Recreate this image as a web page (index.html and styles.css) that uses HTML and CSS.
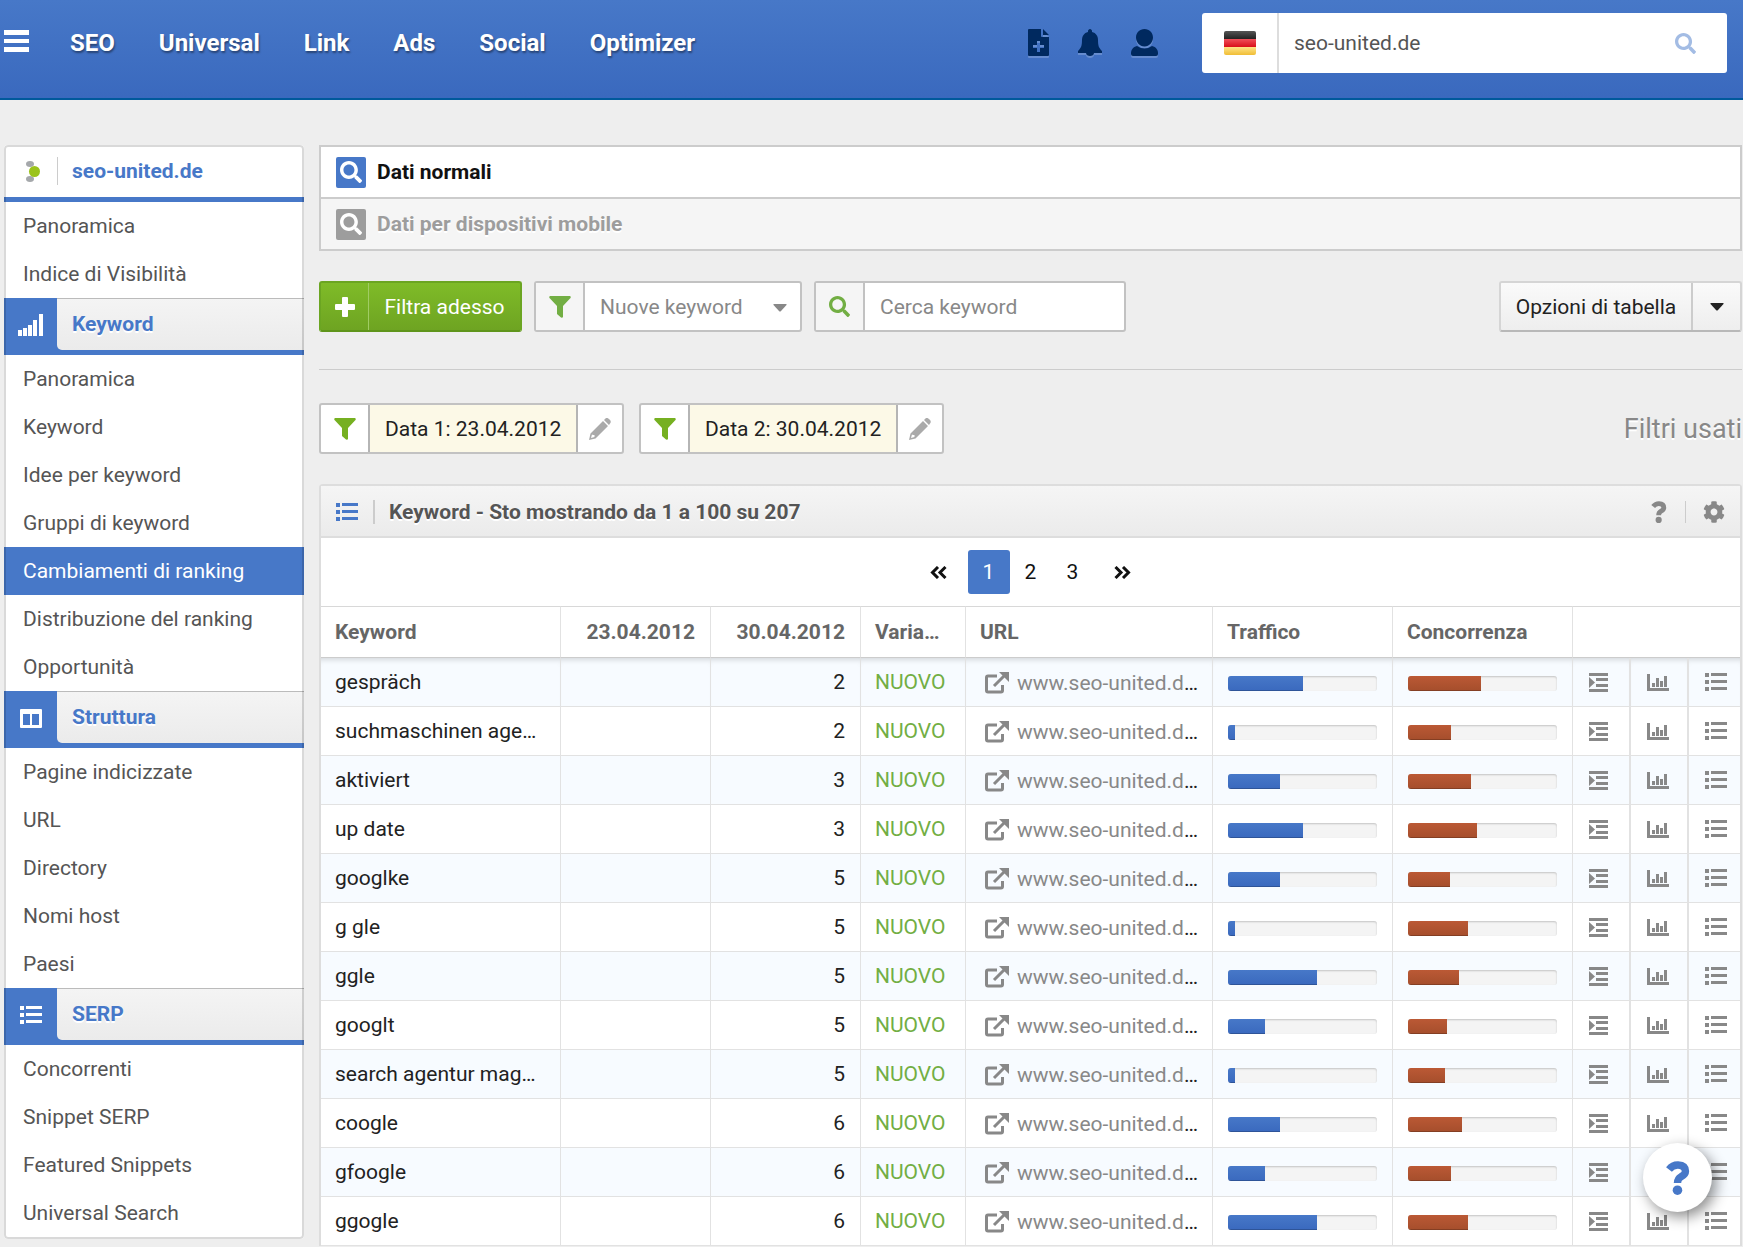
FILE: index.html
```html
<!DOCTYPE html>
<html lang="it">
<head>
  <meta charset="UTF-8">
  <meta name="viewport" content="width=device-width, initial-scale=1.0">
  <title>Cambiamenti di ranking - seo-united.de</title>
  <link rel="stylesheet" href="styles.css">
</head>
<body>
  <!-- Icon sprite -->
  <svg class="sprite" aria-hidden="true">
    <symbol id="i-search" viewBox="0 0 512 512"><path d="M505 442.7L405.3 343c-4.500-4.500-10.600-7-17-7H372c27.600-35.300 44-79.700 44-128C416 93.100 322.900 0 208 0S0 93.100 0 208s93.100 208 208 208c48.300 0 92.700-16.400 128-44v16.300c0 6.400 2.500 12.500 7 17l99.700 99.700c9.400 9.400 24.600 9.400 33.900 0l28.300-28.300c9.400-9.400 9.400-24.600.1-34zM208 336c-70.700 0-128-57.200-128-128 0-70.700 57.200-128 128-128 70.700 0 128 57.200 128 128 0 70.700-57.200 128-128 128z"/></symbol>
    <symbol id="i-cog" viewBox="0 0 512 512"><path d="M487.4 315.7l-42.6-24.6c4.3-23.2 4.3-47 0-70.2l42.6-24.6c4.9-2.8 7.1-8.6 5.5-14-11.1-35.6-30-67.8-54.7-94.6-3.8-4.1-10-5.1-14.8-2.3L380.8 110c-17.9-15.4-38.5-27.3-60.8-35.1V25.8c0-5.6-3.9-10.5-9.4-11.7-36.7-8.2-74.3-7.8-109.2 0-5.5 1.200-9.400 6.100-9.400 11.700V75c-22.200 7.900-42.800 19.800-60.800 35.100L88.700 85.500c-4.900-2.800-11-1.900-14.800 2.300-24.700 26.700-43.600 58.900-54.700 94.600-1.700 5.400.6 11.200 5.500 14L67.300 221c-4.300 23.200-4.300 47 0 70.200l-42.600 24.600c-4.900 2.800-7.100 8.600-5.500 14 11.100 35.600 30 67.800 54.700 94.600 3.800 4.100 10 5.100 14.800 2.300l42.600-24.600c17.900 15.400 38.500 27.300 60.800 35.100v49.200c0 5.600 3.900 10.500 9.400 11.700 36.700 8.200 74.300 7.800 109.200 0 5.500-1.200 9.400-6.100 9.400-11.700v-49.200c22.200-7.900 42.800-19.800 60.800-35.100l42.600 24.600c4.900 2.800 11 1.900 14.800-2.300 24.700-26.700 43.600-58.900 54.700-94.600 1.500-5.500-.7-11.300-5.600-14.100zM256 336c-44.100 0-80-35.900-80-80s35.900-80 80-80 80 35.900 80 80-35.900 80-80 80z"/></symbol>
    <symbol id="i-menu" viewBox="0 0 25 22"><path d="M0 0h25v5H0zM0 9h25v4H0zM0 17h25v5H0z"/></symbol>
    <symbol id="i-file" viewBox="0 0 21 27"><path fill-rule="evenodd" d="M1 0h12v7q0 1 1 1h7v18q0 1-1 1H1q-1 0-1-1V1q0-1 1-1zM9 12v4H5v3h4v4h3v-4h4v-3h-4v-4zM15 0l6 6h-6z"/></symbol>
    <symbol id="i-bell" viewBox="0 0 24 27"><path d="M12 0c1 0 2 1 2 2v1c4 1 6 4 6 8 0 6 1 8 4 11v2H0v-2c3-3 4-5 4-11 0-4 2-7 6-8V2c0-1 1-2 2-2zM8 24h8c0 2-2 3-4 3s-4-1-4-3z"/></symbol>
    <symbol id="i-user" viewBox="0 0 27 27"><path d="M13.500 0c5 0 8.500 4 8.500 8.500s-3.500 9-8.500 9S5 13 5 8.500 8.500 0 13.500 0zM6 17q7.500 5 15 0c4 1 6 4 6 7v1q0 2-2 2H2q-2 0-2-2v-1c0-3 2-6 6-7z"/></symbol>
    <symbol id="i-list" viewBox="0 0 22 18"><path d="M0 0h4v4H0zM6 0h16v3H6zM0 7h4v4H0zM6 7h16v3H6zM0 14h4v4H0zM6 14h16v3H6z"/></symbol>
    <symbol id="i-signal" viewBox="0 0 25 22"><path d="M0 16h4v6H0zM5 14h4v8H5zM10 11h4v11h-4zM15 6h4v16h-4zM21 0h4v22h-4z"/></symbol>
    <symbol id="i-columns" viewBox="0 0 22 19"><path fill-rule="evenodd" d="M1 0h20q1 0 1 1v17q0 1-1 1H1q-1 0-1-1V1q0-1 1-1zM3 5v11h7V5zM12 5v11h7V5z"/></symbol>
    <symbol id="i-filter" viewBox="0 0 22 22"><path d="M1 0h20q1.500 1 0 2.500L14 10v11q-.5 1-2 .5L8 18v-8L1 2.500Q-.5 1 1 0z"/></symbol>
    <symbol id="i-pencil" viewBox="0 0 22 22"><path d="M16 1l1-1q1.500-.5 3 1l1 1q1.500 1.500 0 3.500L20 7l-5-5zM14 3l5 5L6.500 20.500 0 22l1.500-6.500zM3 16.500L2 20l3.500-1v-2H4z" fill-rule="evenodd"/></symbol>
    <symbol id="i-plus" viewBox="0 0 20 20"><path d="M7 1q0-1 1-1h4q1 0 1 1v6h6q1 0 1 1v4q0 1-1 1h-6v6q0 1-1 1H8q-1 0-1-1v-6H1q-1 0-1-1V8q0-1 1-1h6z"/></symbol>
    <symbol id="i-caret" viewBox="0 0 14 8"><path d="M1 0h12q1 0 .5 1L8 7q-1 1-2 0L.5 1Q0 0 1 0z"/></symbol>
    <symbol id="i-help" viewBox="0 0 22 32"><path d="M2.500 8Q6 3.600 11 3.700q7 .3 7 6 0 3-4 5-3.500 2-3.500 6" fill="none" stroke="currentColor" stroke-width="7"/><circle cx="10.500" cy="27.500" r="4.500"/></symbol>
    <symbol id="i-external" viewBox="0 0 24 22"><path d="M12 4H3q-1.500 0-1.500 1.500v13Q1.500 20 3 20h13q1.500 0 1.500-1.500V13M9 14L20 3" fill="none" stroke="currentColor" stroke-width="3"/><path d="M14 0h10v10l-3-3-4-4z"/></symbol>
    <symbol id="i-indent" viewBox="0 0 19 19"><path d="M0 0h19v3H0zM7 5h12v3H7zM7 11h12v3H7zM0 16h19v3H0zM0 4l6 5.500L0 15z"/></symbol>
    <symbol id="i-chart" viewBox="0 0 22 17"><path d="M0 0h3v14h19v3H0zM5 9h3v4H5zM9 4h3v9H9zM13 7h3v6h-3zM17 2h3v11h-3z"/></symbol>
    <symbol id="i-prev" viewBox="0 0 17 13"><path d="M8 1L2.500 6.500 8 12M15.500 1L10 6.500l5.500 5.500" fill="none" stroke="currentColor" stroke-width="3"/></symbol>
    <symbol id="i-next" viewBox="0 0 17 13"><path d="M1.500 1L7 6.500 1.500 12M9 1l5.500 5.500L9 12" fill="none" stroke="currentColor" stroke-width="3"/></symbol>
  </svg>

  <header class="topbar">
    <button class="menu-btn" type="button" aria-label="Menu"><svg width="25" height="22"><use href="#i-menu"/></svg></button>
    <nav class="topnav">
      <a href="#">SEO</a>
      <a href="#">Universal</a>
      <a href="#">Link</a>
      <a href="#">Ads</a>
      <a href="#">Social</a>
      <a href="#">Optimizer</a>
    </nav>
    <div class="topicons">
      <button type="button" aria-label="Nuovo report"><svg width="21" height="27"><use href="#i-file"/></svg></button>
      <button type="button" aria-label="Notifiche"><svg width="24" height="27"><use href="#i-bell"/></svg></button>
      <button type="button" aria-label="Account"><svg width="27" height="27"><use href="#i-user"/></svg></button>
    </div>
    <form class="domain-search">
      <button class="flag-btn" type="button" aria-label="Germania">
        <svg width="32" height="24" viewBox="0 0 32 24">
          <defs>
            <linearGradient id="fk" x2="0" y2="1"><stop offset="0" stop-color="#555"/><stop offset="1" stop-color="#222"/></linearGradient>
            <linearGradient id="fr" x2="0" y2="1"><stop offset="0" stop-color="#f0505a"/><stop offset="1" stop-color="#d90f1a"/></linearGradient>
            <linearGradient id="fg" x2="0" y2="1"><stop offset="0" stop-color="#ffe488"/><stop offset="1" stop-color="#f0bd35"/></linearGradient>
          </defs>
          <path d="M0 8V2q0-2 2-2h28q2 0 2 2v6z" fill="url(#fk)"/>
          <path d="M0 8h32v8H0z" fill="url(#fr)"/>
          <path d="M0 16h32v6q0 2-2 2H2q-2 0-2-2z" fill="url(#fg)"/>
        </svg>
      </button>
      <input type="text" value="seo-united.de" aria-label="Dominio">
      <button class="go-btn" type="submit" aria-label="Cerca"><svg width="21" height="21"><use href="#i-search"/></svg></button>
    </form>
  </header>

  <div class="page">
    <aside class="sidebar">
      <a class="side-domain" href="#">
        <span class="side-favicon">
          <svg width="14" height="21" viewBox="0 0 14 21"><ellipse cx="4" cy="3" rx="4" ry="3" fill="#a5a8ab"/><ellipse cx="4" cy="18" rx="4" ry="3" fill="#a5a8ab"/><circle cx="8.500" cy="10.500" r="5.500" fill="#9bc31c"/></svg>
        </span>
        <span>seo-united.de</span>
      </a>
      <a class="side-link" href="#">Panoramica</a>
      <a class="side-link" href="#">Indice di Visibilità</a>
      <a class="side-section" href="#"><span class="side-icon"><svg width="25" height="22"><use href="#i-signal"/></svg></span><span class="side-label">Keyword</span></a>
      <a class="side-link" href="#">Panoramica</a>
      <a class="side-link" href="#">Keyword</a>
      <a class="side-link" href="#">Idee per keyword</a>
      <a class="side-link" href="#">Gruppi di keyword</a>
      <a class="side-link active" href="#">Cambiamenti di ranking</a>
      <a class="side-link" href="#">Distribuzione del ranking</a>
      <a class="side-link" href="#">Opportunità</a>
      <a class="side-section" href="#"><span class="side-icon"><svg width="22" height="19"><use href="#i-columns"/></svg></span><span class="side-label">Struttura</span></a>
      <a class="side-link" href="#">Pagine indicizzate</a>
      <a class="side-link" href="#">URL</a>
      <a class="side-link" href="#">Directory</a>
      <a class="side-link" href="#">Nomi host</a>
      <a class="side-link" href="#">Paesi</a>
      <a class="side-section" href="#"><span class="side-icon"><svg width="22" height="18"><use href="#i-list"/></svg></span><span class="side-label">SERP</span></a>
      <a class="side-link" href="#">Concorrenti</a>
      <a class="side-link" href="#">Snippet SERP</a>
      <a class="side-link" href="#">Featured Snippets</a>
      <a class="side-link" href="#">Universal Search</a>
    </aside>

    <main class="content">
      <div class="data-tabs">
        <button class="data-tab current" type="button"><span class="tab-icon"><svg width="22" height="22"><use href="#i-search"/></svg></span>Dati normali</button>
        <button class="data-tab" type="button"><span class="tab-icon"><svg width="22" height="22"><use href="#i-search"/></svg></span>Dati per dispositivi mobile</button>
      </div>

      <div class="toolbar">
        <button class="filter-btn" type="button"><span class="filter-plus"><svg width="20" height="20"><use href="#i-plus"/></svg></span><span class="filter-text">Filtra adesso</span></button>
        <div class="field field-select">
          <label for="kwType" aria-label="Filtro"><svg width="22" height="22"><use href="#i-filter"/></svg></label>
          <select id="kwType">
            <option>Nuove keyword</option>
          </select>
          <svg class="select-caret" width="14" height="8"><use href="#i-caret"/></svg>
        </div>
        <div class="field field-search">
          <label for="kwSearch" aria-label="Cerca"><svg width="21" height="21"><use href="#i-search"/></svg></label>
          <input type="text" id="kwSearch" placeholder="Cerca keyword">
        </div>
        <div class="table-options">
          <button type="button">Opzioni di tabella</button>
          <button class="options-caret" type="button" aria-label="Apri opzioni"><svg width="14" height="8"><use href="#i-caret"/></svg></button>
        </div>
      </div>

      <div class="used-filters">
        <div class="chip">
          <span class="chip-icon"><svg width="22" height="22"><use href="#i-filter"/></svg></span>
          <span class="chip-text">Data 1: 23.04.2012</span>
          <button class="chip-edit" type="button" aria-label="Modifica data 1"><svg width="22" height="22"><use href="#i-pencil"/></svg></button>
        </div>
        <div class="chip">
          <span class="chip-icon"><svg width="22" height="22"><use href="#i-filter"/></svg></span>
          <span class="chip-text">Data 2: 30.04.2012</span>
          <button class="chip-edit" type="button" aria-label="Modifica data 2"><svg width="22" height="22"><use href="#i-pencil"/></svg></button>
        </div>
        <h2>Filtri usati</h2>
      </div>

      <section class="panel">
        <div class="panel-head">
          <svg class="panel-icon" width="22" height="18"><use href="#i-list"/></svg>
          <h3>Keyword - Sto mostrando da 1 a 100 su 207</h3>
          <button type="button" aria-label="Aiuto"><svg width="16" height="22"><use href="#i-help"/></svg></button>
          <button class="panel-cog" type="button" aria-label="Impostazioni"><svg width="22" height="22"><use href="#i-cog"/></svg></button>
        </div>
        <nav class="pager">
          <a class="pager-arrow" href="#" aria-label="Precedente"><svg width="17" height="13"><use href="#i-prev"/></svg></a>
          <a class="current" href="#">1</a>
          <a href="#">2</a>
          <a href="#">3</a>
          <a class="pager-arrow" href="#" aria-label="Successiva"><svg width="17" height="13"><use href="#i-next"/></svg></a>
        </nav>
        <table class="kw-table">
          <colgroup>
            <col class="col-kw"><col class="col-date"><col class="col-date"><col class="col-var"><col class="col-url">
            <col class="col-bar"><col class="col-bar"><col class="col-act"><col class="col-act"><col class="col-last">
          </colgroup>
          <thead>
            <tr>
              <th>Keyword</th>
              <th class="num">23.04.2012</th>
              <th class="num">30.04.2012</th>
              <th>Varia…</th>
              <th>URL</th>
              <th>Traffico</th>
              <th>Concorrenza</th>
              <th colspan="3"></th>
            </tr>
          </thead>
          <tbody id="kwRows"></tbody>
        </table>
      </section>
    </main>
  </div>

  <button class="help-bubble" type="button" aria-label="Assistenza"><svg width="24" height="34"><use href="#i-help"/></svg></button>

  <script src="script.js"></script>
</body>
</html>
```

FILE: styles.css
```css
* {
  box-sizing: border-box;
}
body {
  margin: 0;
  background: #eee;
  color: #222;
  font-family: Roboto, "Liberation Sans", sans-serif;
  font-size: 21px;
  line-height: 24px;
}
a {
  color: inherit;
  text-decoration: none;
}
button, input, select {
  margin: 0;
  padding: 0;
  border: 0;
  background: none;
  color: inherit;
  font: inherit;
}
button {
  cursor: pointer;
}
svg {
  display: block;
  flex: none;
  fill: currentColor;
}
h2, h3 {
  margin: 0;
}
.sprite {
  position: absolute;
  width: 0;
  height: 0;
}

/* Top bar */
.topbar {
  display: flex;
  align-items: flex-start;
  height: 100px;
  padding: 13px 16px 0 4px;
  border-bottom: 2px solid #00599b;
  background: linear-gradient(#4778c8, #3a69be);
  color: #fff;
}
.menu-btn {
  height: 56px;
}
.topnav {
  display: flex;
  gap: 44px;
  margin-left: 41px;
  font-size: 24px;
  font-weight: 700;
  line-height: 60px;
  text-shadow: 1px 2px 2px rgba(0, 0, 0, 0.4);
}
.topicons {
  display: flex;
  gap: 29px;
  height: 59px;
  margin-left: auto;
  color: #00295f;
}
.topicons svg {
  filter: drop-shadow(0 2px 0 rgba(255, 255, 255, 0.2));
}
.domain-search {
  display: flex;
  width: 525px;
  height: 60px;
  margin-left: 44px;
  border-radius: 3px;
  background: #fff;
  color: #555;
}
.flag-btn {
  display: flex;
  align-items: center;
  justify-content: center;
  width: 77px;
  border-right: 2px solid #ddd;
}
.domain-search input {
  flex: 1;
  min-width: 0;
  padding-left: 15px;
}
.go-btn {
  width: 84px;
  padding-left: 32px;
  color: #a3bce4;
}

/* Page layout */
.page {
  display: flex;
  align-items: flex-start;
  gap: 15px;
  padding: 45px 1px 0 4px;
}

/* Sidebar */
.sidebar {
  position: relative;
  flex: none;
  width: 300px;
  padding-bottom: 2px;
  border-radius: 4px;
  overflow: hidden;
  background: #fff;
  color: #555;
}
.sidebar::after {
  content: "";
  position: absolute;
  inset: 0;
  border: 2px solid rgba(0, 0, 0, 0.15);
  border-radius: 4px;
  pointer-events: none;
}
.side-domain {
  display: flex;
  align-items: center;
  height: 57px;
  border-bottom: 5px solid #4778c8;
  color: #4778c8;
  font-weight: 700;
}
.side-favicon {
  display: flex;
  align-items: center;
  justify-content: center;
  width: 54px;
  height: 28px;
  margin-right: 14px;
  padding-left: 4px;
  border-right: 1px solid #ccc;
}
.side-link {
  display: block;
  padding: 12px 19px;
}
.side-link.active {
  background: #4778c8;
  color: #fff;
}
.side-section {
  display: flex;
  height: 57px;
  background: #4778c8;
}
.side-icon {
  display: flex;
  align-items: center;
  justify-content: center;
  width: 53px;
  height: 54px;
  color: #fff;
}
.side-label {
  flex: 1;
  height: 52px;
  padding: 13px 15px;
  border-top: 1px solid #bbb;
  border-bottom-left-radius: 5px;
  background: linear-gradient(#f4f4f4, #ebebeb);
  color: #4778c8;
  font-weight: 700;
  text-shadow: 0 2px 0 #fff;
}

/* Content */
.content {
  flex: 1;
  min-width: 0;
}
.data-tabs {
  display: flex;
  flex-direction: column;
  border: 2px solid #ccc;
}
.data-tab {
  display: flex;
  align-items: center;
  gap: 11px;
  height: 50px;
  padding-left: 15px;
  background: #f5f5f5;
  color: #9d9d9d;
  font-weight: 700;
  text-shadow: 0 2px 0 #fff;
}
.data-tab.current {
  height: 52px;
  border-bottom: 2px solid #ccc;
  background: #fff;
  color: #111;
}
.tab-icon {
  display: flex;
  align-items: center;
  justify-content: center;
  width: 30px;
  height: 31px;
  border-radius: 2px;
  background: #9d9d9d;
  color: #fff;
}
.current .tab-icon {
  background: #4778c8;
}

/* Toolbar */
.toolbar {
  display: flex;
  gap: 12px;
  padding: 30px 0 37px;
  border-bottom: 1px solid #ccc;
}
.filter-btn {
  display: flex;
  align-items: stretch;
  width: 203px;
  height: 51px;
  border: 2px solid #6ba522;
  border-bottom-color: #5f951b;
  border-radius: 3px;
  background: linear-gradient(#7fbb28, #6ea422);
  color: #fff;
}
.filter-plus {
  display: flex;
  align-items: center;
  justify-content: center;
  width: 48px;
  border-right: 1px solid #a0cc64;
}
.filter-text {
  flex: 1;
  line-height: 48px;
}
.field {
  position: relative;
  display: flex;
  height: 51px;
  border: 2px solid #c2c2c2;
  border-radius: 3px;
  background: #fff;
  color: #888;
}
.field label {
  display: flex;
  align-items: center;
  justify-content: center;
  width: 49px;
  border-right: 2px solid #c2c2c2;
  background: #f5f5f5;
  color: #72ae43;
}
.field select, .field input {
  flex: 1;
  min-width: 0;
  padding: 0 15px;
  appearance: none;
}
.field input::placeholder {
  color: #888;
}
.field-select {
  width: 268px;
}
.field-search {
  width: 312px;
}
.select-caret {
  position: absolute;
  right: 13px;
  top: 21px;
  pointer-events: none;
}
.table-options {
  display: flex;
  width: 243px;
  height: 51px;
  margin-left: auto;
  border: 2px solid #d5d5d5;
  border-bottom-color: #b8b8b8;
  border-radius: 3px;
  background: linear-gradient(#fafafa, #eee);
}
.table-options button {
  flex: 1;
}
.table-options .options-caret {
  display: flex;
  flex: none;
  align-items: center;
  justify-content: center;
  width: 49px;
  border-left: 2px solid #ccc;
}

/* Used filters */
.used-filters {
  display: flex;
  align-items: center;
  gap: 15px;
  padding: 33px 0 30px;
}
.used-filters h2 {
  margin-left: auto;
  color: #888;
  font-size: 27px;
  font-weight: 400;
  text-shadow: 0 2px 0 #fff;
}
.chip {
  display: flex;
  width: 305px;
  height: 51px;
  border: 2px solid #c2c2c2;
  border-radius: 3px;
  background: #fff;
}
.chip-icon, .chip-edit {
  display: flex;
  align-items: center;
  justify-content: center;
  width: 47px;
  color: #76b021;
}
.chip-edit {
  width: 44px;
  color: #aaa;
}
.chip-text {
  flex: 1;
  padding-left: 15px;
  border: solid #b5b5b5;
  border-width: 0 2px;
  background: #fcf9e7;
  line-height: 48px;
}

/* Keyword panel */
.panel {
  border: 2px solid #ddd;
  border-bottom: 0;
  border-radius: 4px 4px 0 0;
  background: #fff;
}
.panel-head {
  display: flex;
  align-items: center;
  height: 52px;
  padding: 2px 15px 0;
  border-bottom: 2px solid #ddd;
  background: linear-gradient(#f5f5f5, #ebebeb);
  color: #888;
}
.panel-icon {
  color: #4778c8;
}
.panel-head h3 {
  flex: 1;
  margin-left: 15px;
  padding-left: 14px;
  border-left: 2px solid #ccc;
  color: #555;
  font-size: 21px;
  font-weight: 700;
  text-shadow: 0 2px 0 #fff;
}
.panel-head .panel-cog {
  margin-left: 18px;
  padding-left: 17px;
  border-left: 1px solid #ccc;
}
.pager {
  display: flex;
  justify-content: center;
  padding: 12px 0;
  color: #111;
}
.pager a {
  width: 42px;
  border-radius: 3px;
  line-height: 44px;
  text-align: center;
}
.pager .current {
  background: #4778c8;
  color: #fff;
}
.pager .pager-arrow {
  display: flex;
  align-items: center;
  justify-content: center;
  width: 58px;
}

/* Keyword table */
.kw-table {
  width: 100%;
  table-layout: fixed;
  border-collapse: separate;
  border-spacing: 0;
}
.col-kw {
  width: 240px;
}
.col-date {
  width: 150px;
}
.col-var {
  width: 105px;
}
.col-url {
  width: 247px;
}
.col-bar {
  width: 180px;
}
.col-act {
  width: 58px;
}
.kw-table th, .kw-table td {
  padding: 0 15px 0 14px;
  border-right: 1px solid #e2e2e2;
  text-align: left;
  white-space: nowrap;
}
.kw-table th {
  height: 52px;
  border-top: 1px solid #d8d8d8;
  border-bottom: 1px solid #ccc;
  color: #666;
  font-weight: 700;
}
.kw-table td {
  height: 49px;
  border-bottom: 1px solid #e2e2e2;
}
.kw-table .bar-cell {
  padding: 2px 15px 0;
}
.kw-table .num {
  text-align: right;
}
.kw-table th:last-child, .kw-table td:last-child {
  border-right: 0;
}
.kw-table tbody tr:nth-child(odd) {
  background: #f7fbff;
}
.kw-table tbody tr:first-child td {
  box-shadow: inset 0 6px 6px -5px rgba(0, 0, 0, 0.18);
}
.kw-table .is-new {
  color: #72ae43;
}
.url-cell {
  display: flex;
  align-items: center;
  padding: 2px 0 0 5px;
}
.url-cell a {
  display: flex;
  align-items: center;
  gap: 8px;
  color: #888;
}
.bar {
  height: 15px;
  border-radius: 3px;
  overflow: hidden;
  background: #f4f4f4;
  box-shadow: inset 0 1px 2px rgba(0, 0, 0, 0.2);
}
.bar-fill {
  height: 100%;
  background: linear-gradient(#4778c8, #3a69be);
  box-shadow: inset 0 -1px 0 rgba(0, 0, 0, 0.2);
}
.bar-fill.red {
  background: linear-gradient(#bb5935, #a54e2c);
}
.kw-table .act {
  padding: 0 0 0 16px;
  border-right-width: 2px;
  color: #888;
}
.act a {
  display: block;
}

/* Floating help button */
.help-bubble {
  position: fixed;
  right: 31px;
  bottom: 35px;
  display: flex;
  align-items: center;
  justify-content: center;
  width: 69px;
  height: 69px;
  border-radius: 50%;
  background: #fff;
  box-shadow: 4px 5px 14px rgba(0, 0, 0, 0.45);
  color: #4778c8;
}
```

FILE: script.js
```js
// keyword, position, traffic %, competition %
const rows = [
  ['gespräch', 2, 50, 49],
  ['suchmaschinen age…', 2, 5, 29],
  ['aktiviert', 3, 35, 42],
  ['up date', 3, 50, 46],
  ['googlke', 5, 35, 28],
  ['g gle', 5, 5, 40],
  ['ggle', 5, 60, 34],
  ['googlt', 5, 25, 26],
  ['search agentur mag…', 5, 5, 25],
  ['coogle', 6, 35, 36],
  ['gfoogle', 6, 25, 29],
  ['ggogle', 6, 60, 40]
];

function icon(name, width, height) {
  return `<svg width="${width}" height="${height}"><use href="#i-${name}"/></svg>`;
}

document.getElementById('kwRows').innerHTML = rows.map(([keyword, position, traffic, competition]) => `
  <tr>
    <td>${keyword}</td>
    <td></td>
    <td class="num">${position}</td>
    <td class="is-new">NUOVO</td>
    <td><div class="url-cell"><a href="#">${icon('external', 24, 22)}www.seo-united.d</a>…</div></td>
    <td class="bar-cell"><div class="bar"><div class="bar-fill" style="width: ${traffic}%"></div></div></td>
    <td class="bar-cell"><div class="bar"><div class="bar-fill red" style="width: ${competition}%"></div></div></td>
    <td class="act"><a href="#" aria-label="Dettagli">${icon('indent', 19, 19)}</a></td>
    <td class="act"><a href="#" aria-label="Grafico">${icon('chart', 22, 17)}</a></td>
    <td class="act"><a href="#" aria-label="Elenco">${icon('list', 22, 18)}</a></td>
  </tr>`).join('');
```
